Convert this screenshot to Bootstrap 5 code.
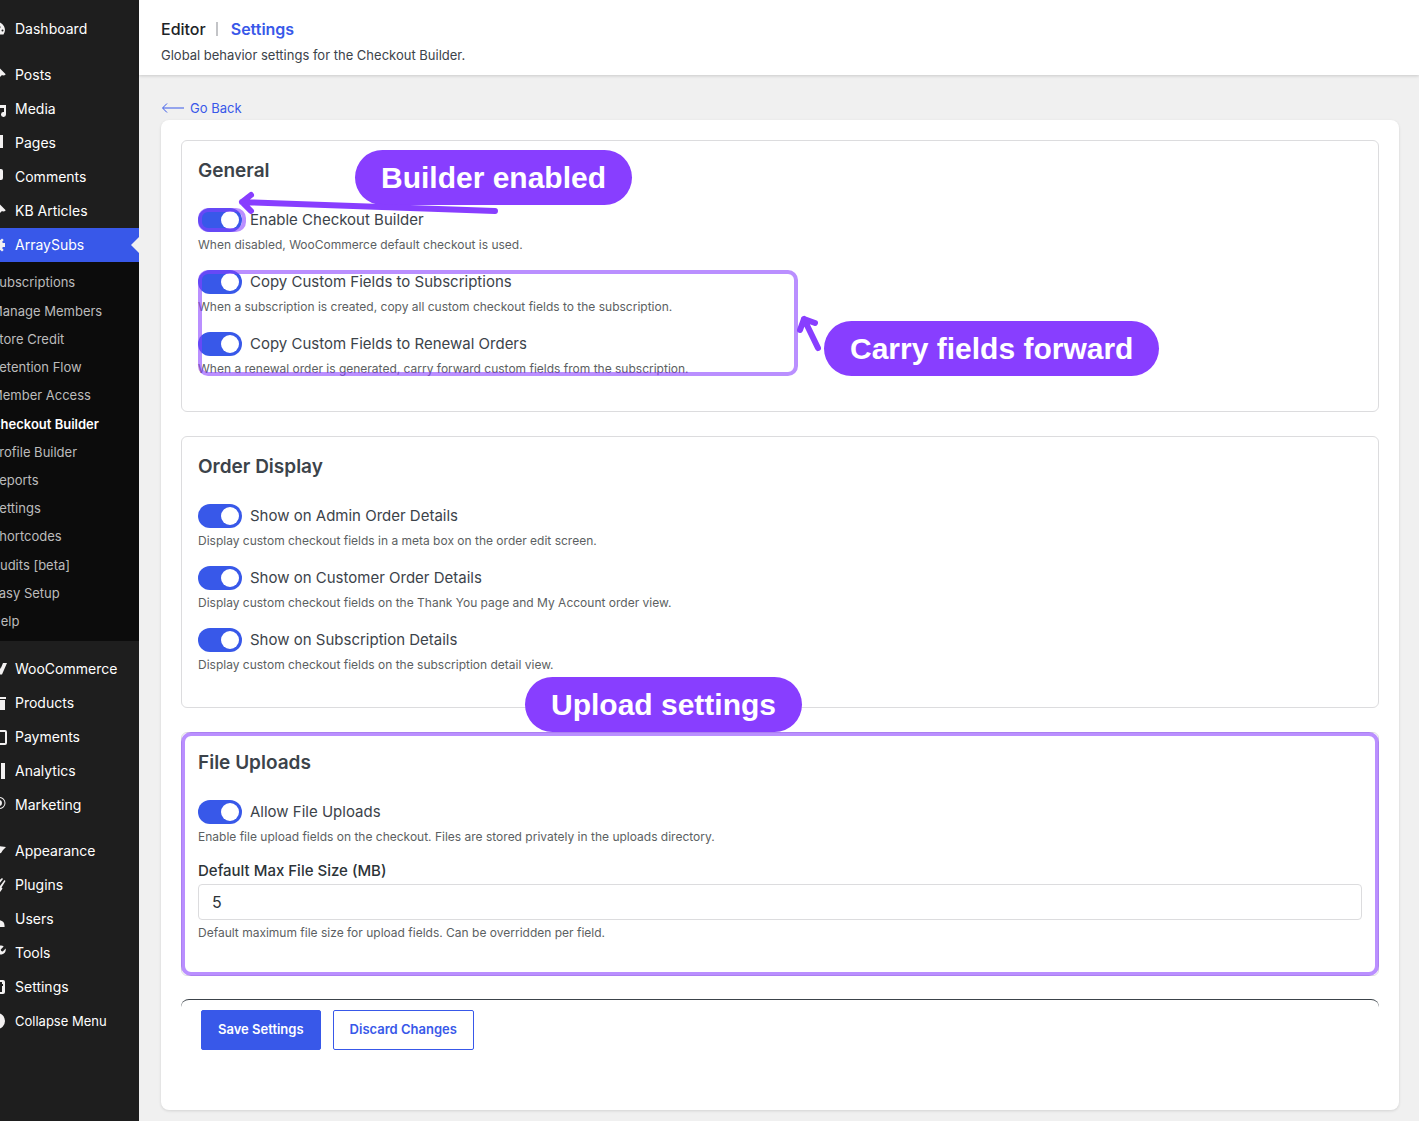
<!DOCTYPE html>
<html lang="en">
<head>
<meta charset="utf-8">
<meta name="viewport" content="width=device-width, initial-scale=1">
<title>Checkout Builder Settings</title>
<link href="https://cdn.jsdelivr.net/npm/bootstrap@5.3.0/dist/css/bootstrap.min.css" rel="stylesheet">
<style>
  :root { --brand: #3858e9; --note: #883eff; --note-soft: rgba(136, 62, 255, .58); }
  body { font-family: Inter, "Noto Sans", sans-serif; font-size: 13px; background: #f0f0f0; color: #3c434a; }
  a { text-decoration: none; }

  /* Admin menu, slid 21px under the left window edge */
  .side-menu { width: 139px; background: #1e1e1e; overflow: hidden; }
  .side-inner { width: 160px; margin-left: -21px; padding-top: 12px; }
  .side-link { height: 34px; color: #fff; font-size: 14px; line-height: 20px; padding-bottom: 1px; white-space: nowrap; }
  .side-link svg { width: 20px; height: 20px; margin: 0 8px; fill: #f3f1f1; flex: none; }
  .side-current { background: var(--brand); position: relative; }
  .side-current::after { content: ""; position: absolute; right: 0; border: 8px solid transparent; border-right-color: #f0f0f0; }
  .side-gap { margin-top: 12px; }
  .sub-menu + .side-gap { margin-top: 11px; }
  .collapse-btn { background: none; border: 0; padding: 0; font-size: 13px; }
  .sub-menu { background: #0c0c0c; height: 379px; padding: 7px 12px 5px; }
  .sub-menu a { color: #bcbcbc; white-space: nowrap; }
  .sub-menu a.current { color: #fff; font-weight: 600; }

  .top-bar { background: #fff; height: 75px; padding: 17px 22px 0; box-shadow: 0 1px 3px rgba(0, 0, 0, .16); }
  .top-tabs { font-size: 16px; line-height: 24px; font-weight: 500; }
  .top-tabs a { color: #1d2327; }
  .top-tabs a.current { color: var(--brand); font-weight: 600; }
  .tab-rule { width: 2px; height: 14px; margin: 0 13px 0 10px; background: #c3c4c7; }
  .top-note { line-height: 20px; margin-top: 4px; }
  .page-body { padding: 23px 20px 11px 22px; }
  .back-link { color: var(--brand); line-height: 20px; margin-bottom: 2px; }
  .panel-box { background: #fff; border-radius: 8px; padding: 20px; box-shadow: 0 1px 3px rgba(0, 0, 0, .12); }

  .set-group { border: 1px solid #dcdcde; border-radius: 6px; padding: 16px; margin-bottom: 24px; position: relative; }
  .set-group h2 { font-size: 19px; line-height: 28px; font-weight: 600; margin-bottom: 23px; }
  .set-item { margin-bottom: 17px; }
  .set-item:last-of-type { margin-bottom: 18px; }
  .set-item .form-check { min-height: 24px; }
  .set-item .form-check-input { width: 44px; height: 24px; border: 0; }
  .set-item .form-check-input:checked { background-color: var(--brand); }
  .set-item .form-check-label { font-size: 15px; line-height: 24px; }
  .hint { font-size: 12px; line-height: 16px; margin: 5px 0 0; color: #5c5f62; }
  .size-label { display: block; font-size: 15px; line-height: 18px; font-weight: 500; color: #2c3338; }
  .size-input { height: 36px; margin-top: 4px; font-size: 16px; padding: 0 13px; border-color: #dcdcde; border-radius: 4px; color: #2c3338; }

  .foot-bar { margin-top: -1px; border-top: 1px solid #3c434a; border-radius: 8px; padding: 10px 20px 40px; }
  .foot-bar .btn { height: 40px; padding: 0 16px; font-size: 13px; font-weight: 600; border-radius: 2px; border-color: var(--brand); color: var(--brand); }
  .foot-bar .btn-primary { background: var(--brand); color: #fff; }

  /* Callouts drawn over the page */
  .note-pill { position: absolute; height: 55px; padding: 0 26px; border-radius: 28px; background: var(--note); color: #fff; font: bold 30px/55px "Liberation Sans", Arial, sans-serif; white-space: nowrap; }
  .note-frame { position: absolute; border: 4px solid var(--note-soft); border-radius: 10px; pointer-events: none; }
  .note-arrow { position: absolute; fill: none; stroke: var(--note); stroke-width: 6; stroke-linecap: round; stroke-linejoin: round; pointer-events: none; }
  .pill-builder { left: 173px; top: 9px; }
  .pill-carry { left: 642px; top: 180px; }
  .pill-upload { left: 343px; top: -56px; }
  .frame-toggle { left: 16px; top: 67px; width: 48px; height: 24px; }
  .frame-copy { left: 16px; top: 129px; width: 600px; height: 106px; }
  .frame-upload { inset: -1px; }
  .arrow-builder { left: 52px; top: 48px; }
  .arrow-carry { left: 611px; top: 170px; }
</style>
</head>
<body>
<div class="d-flex min-vh-100">
  <nav class="side-menu flex-shrink-0" aria-label="Admin menu">
    <div class="side-inner">
      <a href="#" class="side-link d-flex align-items-center"><svg viewBox="0 0 20 20"><path fill-rule="evenodd" d="M10 3a8 8 0 0 1 6.500 12.500H3.500A8 8 0 0 1 10 3zm0 2.200a1 1 0 1 0 0 2 1 1 0 0 0 0-2zM14 7l-4.500 4a1.800 1.800 0 1 0 2.200 1.800zm1.500 3.500a1 1 0 1 0 0 2 1 1 0 0 0 0-2z"/></svg>Dashboard</a>
      <a href="#" class="side-link side-gap d-flex align-items-center"><svg viewBox="0 0 20 20"><path d="M10.400 3l1-1 7.300 7.300-1 1c-1.200.3-2.200 0-3 0l-3.300 3.300c.4 1.600.1 3-.9 4l-3.500-3.500L3 18l-1-1 4-4-3.500-3.500c1-1 2.400-1.300 4-.9L10 5.500z"/></svg>Posts</a>
      <a href="#" class="side-link d-flex align-items-center"><svg viewBox="0 0 20 20"><path d="M2 3h9v8H2zM13 6h6v9.500a2.500 2.500 0 1 1-2-2.400V9h-4z"/></svg>Media</a>
      <a href="#" class="side-link d-flex align-items-center"><svg viewBox="0 0 20 20"><path d="M6 2h10v13H6zM3 5h2v11h8v2H3z"/></svg>Pages</a>
      <a href="#" class="side-link d-flex align-items-center"><svg viewBox="0 0 20 20"><path d="M5 2h9a2 2 0 0 1 2 2v7a2 2 0 0 1-2 2h-2l-5 5v-5H5a2 2 0 0 1-2-2V4a2 2 0 0 1 2-2z"/></svg>Comments</a>
      <a href="#" class="side-link d-flex align-items-center"><svg viewBox="0 0 20 20"><path d="M10.400 3l1-1 7.300 7.300-1 1c-1.200.3-2.200 0-3 0l-3.300 3.300c.4 1.600.1 3-.9 4l-3.500-3.500L3 18l-1-1 4-4-3.500-3.500c1-1 2.400-1.300 4-.9L10 5.500z"/></svg>KB Articles</a>
      <a href="#" class="side-link side-current d-flex align-items-center" aria-current="true"><svg viewBox="0 0 20 20"><path fill-rule="evenodd" d="M18 12h-2.200l-.6 1.300 1.500 1.600-1.700 1.700-1.600-1.500-1.400.6V18H8v-2.300l-1.400-.6L5 16.600 3.300 15l1.500-1.700L4.200 12H2V8h2.200l.6-1.300L3.300 5 5 3.400l1.600 1.500L8 4.300V2h4v2.300l1.400.6L15 3.400 16.700 5l-1.500 1.700.6 1.300H18zM10 7a3 3 0 1 0 0 6 3 3 0 0 0 0-6z"/></svg>ArraySubs</a>
      <div class="sub-menu d-flex flex-column">
        <a href="#" class="flex-fill d-flex align-items-center">Subscriptions</a>
        <a href="#" class="flex-fill d-flex align-items-center">Manage Members</a>
        <a href="#" class="flex-fill d-flex align-items-center">Store Credit</a>
        <a href="#" class="flex-fill d-flex align-items-center">Retention Flow</a>
        <a href="#" class="flex-fill d-flex align-items-center">Member Access</a>
        <a href="#" class="flex-fill d-flex align-items-center current" aria-current="page">Checkout Builder</a>
        <a href="#" class="flex-fill d-flex align-items-center">Profile Builder</a>
        <a href="#" class="flex-fill d-flex align-items-center">Reports</a>
        <a href="#" class="flex-fill d-flex align-items-center">Settings</a>
        <a href="#" class="flex-fill d-flex align-items-center">Shortcodes</a>
        <a href="#" class="flex-fill d-flex align-items-center">Audits [beta]</a>
        <a href="#" class="flex-fill d-flex align-items-center">Easy Setup</a>
        <a href="#" class="flex-fill d-flex align-items-center">Help</a>
      </div>
      <a href="#" class="side-link side-gap d-flex align-items-center"><svg viewBox="0 0 20 20"><path d="M2 4h3l1.500 7L10 4h2l1.500 6L16 4h4l-5 11.500h-3L10.500 10 7.500 15.500H5z"/></svg>WooCommerce</a>
      <a href="#" class="side-link d-flex align-items-center"><svg viewBox="0 0 20 20"><path d="M1 4h18v2H1zM2 7h16v10H2z"/></svg>Products</a>
      <a href="#" class="side-link d-flex align-items-center"><svg viewBox="0 0 20 20"><path fill-rule="evenodd" d="M2 3h16a2 2 0 0 1 2 2v11a2 2 0 0 1-2 2H2zM4 5v11h14V5z"/></svg>Payments</a>
      <a href="#" class="side-link d-flex align-items-center"><svg viewBox="0 0 20 20"><path d="M2 10h4v8H2zM8 6h4v12H8zM14 2h4v16h-4z"/></svg>Analytics</a>
      <a href="#" class="side-link d-flex align-items-center"><svg viewBox="0 0 20 20"><path fill-rule="evenodd" d="M12.500 2a6 6 0 1 1 0 12 6 6 0 0 1 0-12zm0 1a5 5 0 1 0 0 10 5 5 0 0 0 0-10z"/><circle cx="12" cy="8" r="3"/><path d="M3 10h6v7H3z"/></svg>Marketing</a>
      <a href="#" class="side-link side-gap d-flex align-items-center"><svg viewBox="0 0 20 20"><path d="M8 3l4 2 7 1-3 3-2 3-5 1-4 5-2-2 5-5z"/></svg>Appearance</a>
      <a href="#" class="side-link d-flex align-items-center"><svg viewBox="0 0 20 20"><path d="M13 11l4.500-6 1 1-4 6.500 1 1-2 3c-2 1.500-4 1.500-5.500.5L4 18l-1-1 3-4c-1-2-.5-4 1-5.500l3-2 1 1L15 3l1 1-4 5z"/></svg>Plugins</a>
      <a href="#" class="side-link d-flex align-items-center"><svg viewBox="0 0 20 20"><circle cx="9" cy="6" r="4"/><path d="M2 18c0-5 3-7 8-7s8 2 7.500 7z"/></svg>Users</a>
      <a href="#" class="side-link d-flex align-items-center"><svg viewBox="0 0 20 20"><path d="M16.700 3.500l-3 3 .5 1.500 1.500.5 3-3c.5 3-1 5.500-4 6-1 .2-2 0-2.700-.3L5.500 18 3 15.500l6.500-6.800C8.500 5.500 10 3 13 2.500c1.500-.3 2.700 0 3.700 1z"/></svg>Tools</a>
      <a href="#" class="side-link d-flex align-items-center"><svg viewBox="0 0 20 20"><path fill-rule="evenodd" d="M4 3h12a2 2 0 0 1 2 2v10a2 2 0 0 1-2 2H4a2 2 0 0 1-2-2V5a2 2 0 0 1 2-2zm2 2v4H5v2h1v4h2v-4h1V9H8V5zm7 0v2h-2v2h2v6h2V9h1V7h-1V5z"/></svg>Settings</a>
      <button type="button" class="side-link collapse-btn d-flex align-items-center"><svg viewBox="0 0 20 20"><path fill-rule="evenodd" d="M10 2a8 8 0 1 1 0 16 8 8 0 0 1 0-16zm2 4l-5 4 5 4z"/></svg>Collapse Menu</button>
    </div>
  </nav>

  <div class="flex-grow-1">
    <header class="top-bar">
      <nav class="top-tabs d-flex align-items-center" aria-label="Checkout Builder">
        <a href="#">Editor</a>
        <span class="tab-rule"></span>
        <a href="#" class="current" aria-current="page">Settings</a>
      </nav>
      <p class="top-note mb-0">Global behavior settings for the Checkout Builder.</p>
    </header>

    <main class="page-body">
      <a href="#" class="back-link d-flex align-items-center">
        <svg class="me-1" width="25" height="12" viewBox="0 0 25 12" fill="none" stroke="currentColor"><path d="M6 1.500L1.500 6 6 10.500M2 6h21"/></svg>Go Back
      </a>
      <form class="panel-box">
        <section class="set-group">
          <h2>General</h2>
          <div class="set-item">
            <div class="form-check form-switch d-flex gap-2 p-0 m-0">
              <input class="form-check-input m-0" type="checkbox" role="switch" id="enableBuilder" checked>
              <label class="form-check-label" for="enableBuilder">Enable Checkout Builder</label>
            </div>
            <p class="hint">When disabled, WooCommerce default checkout is used.</p>
          </div>
          <div class="set-item">
            <div class="form-check form-switch d-flex gap-2 p-0 m-0">
              <input class="form-check-input m-0" type="checkbox" role="switch" id="copySubs" checked>
              <label class="form-check-label" for="copySubs">Copy Custom Fields to Subscriptions</label>
            </div>
            <p class="hint">When a subscription is created, copy all custom checkout fields to the subscription.</p>
          </div>
          <div class="set-item">
            <div class="form-check form-switch d-flex gap-2 p-0 m-0">
              <input class="form-check-input m-0" type="checkbox" role="switch" id="copyRenewal" checked>
              <label class="form-check-label" for="copyRenewal">Copy Custom Fields to Renewal Orders</label>
            </div>
            <p class="hint">When a renewal order is generated, carry forward custom fields from the subscription.</p>
          </div>
          <span class="note-frame frame-toggle"></span>
          <span class="note-frame frame-copy"></span>
          <span class="note-pill pill-builder">Builder enabled</span>
          <span class="note-pill pill-carry">Carry fields forward</span>
          <svg class="note-arrow arrow-builder" width="270" height="32" viewBox="0 0 270 32"><path d="M261 22L8 13M17 6L8 13l9 9"/></svg>
          <svg class="note-arrow arrow-carry" width="34" height="46" viewBox="0 0 34 46"><path d="M25 37L11 8M22 12L11 8 7 19"/></svg>
        </section>

        <section class="set-group">
          <h2>Order Display</h2>
          <div class="set-item">
            <div class="form-check form-switch d-flex gap-2 p-0 m-0">
              <input class="form-check-input m-0" type="checkbox" role="switch" id="showAdmin" checked>
              <label class="form-check-label" for="showAdmin">Show on Admin Order Details</label>
            </div>
            <p class="hint">Display custom checkout fields in a meta box on the order edit screen.</p>
          </div>
          <div class="set-item">
            <div class="form-check form-switch d-flex gap-2 p-0 m-0">
              <input class="form-check-input m-0" type="checkbox" role="switch" id="showCustomer" checked>
              <label class="form-check-label" for="showCustomer">Show on Customer Order Details</label>
            </div>
            <p class="hint">Display custom checkout fields on the Thank You page and My Account order view.</p>
          </div>
          <div class="set-item">
            <div class="form-check form-switch d-flex gap-2 p-0 m-0">
              <input class="form-check-input m-0" type="checkbox" role="switch" id="showSub" checked>
              <label class="form-check-label" for="showSub">Show on Subscription Details</label>
            </div>
            <p class="hint">Display custom checkout fields on the subscription detail view.</p>
          </div>
        </section>

        <section class="set-group">
          <h2>File Uploads</h2>
          <div class="set-item">
            <div class="form-check form-switch d-flex gap-2 p-0 m-0">
              <input class="form-check-input m-0" type="checkbox" role="switch" id="allowUploads" checked>
              <label class="form-check-label" for="allowUploads">Allow File Uploads</label>
            </div>
            <p class="hint">Enable file upload fields on the checkout. Files are stored privately in the uploads directory.</p>
          </div>
          <div class="set-item">
            <label class="size-label" for="maxSize">Default Max File Size (MB)</label>
            <input class="form-control size-input" type="number" id="maxSize" value="5">
            <p class="hint">Default maximum file size for upload fields. Can be overridden per field.</p>
          </div>
          <span class="note-frame frame-upload"></span>
          <span class="note-pill pill-upload">Upload settings</span>
        </section>

        <div class="foot-bar d-flex">
          <button type="submit" class="btn btn-primary me-2">Save Settings</button>
          <button type="reset" class="btn ms-1">Discard Changes</button>
        </div>
      </form>
    </main>
  </div>
</div>
<script src="https://cdn.jsdelivr.net/npm/bootstrap@5.3.0/dist/js/bootstrap.bundle.min.js"></script>
</body>
</html>
